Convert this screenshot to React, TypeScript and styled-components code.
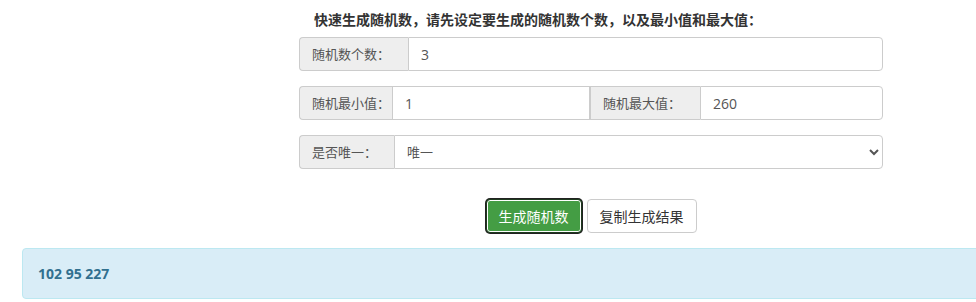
import React from "react";
import styled, { createGlobalStyle } from "styled-components";

const GlobalStyle = createGlobalStyle`
  html, body {
    margin: 0;
    padding: 0;
    background: #fff;
    overflow: hidden;
  }
  body {
    font-family: "Open Sans", "Noto Sans CJK SC", sans-serif;
    font-size: 14px;
    color: #333;
  }
`;

const Page = styled.div`
  width: 976px;
  padding-top: 10px;
`;

const Form = styled.div`
  width: 584px;
  margin-left: 299px;
`;

const Title = styled.div`
  font-weight: bold;
  line-height: 20px;
  padding-left: 15px;
  margin-bottom: 7px;
  color: #333;
`;

const Group = styled.div`
  display: flex;
  height: 34px;
  margin-bottom: 15px;
`;

const Addon = styled.span<{ $w: number; $first?: boolean }>`
  display: flex;
  align-items: center;
  box-sizing: border-box;
  width: ${(p) => p.$w}px;
  flex: none;
  padding: 0 0 0 12px;
  white-space: nowrap;
  font-size: 13px;
  background: #eee;
  color: #555;
  border: 1px solid #ccc;
  border-right: none;
  border-radius: ${(p) => (p.$first ? "4px 0 0 4px" : "0")};
  line-height: 1;
`;

const Input = styled.input<{ $last?: boolean; $w?: number }>`
  box-sizing: border-box;
  flex: ${(p) => (p.$w ? "none" : "1")};
  width: ${(p) => (p.$w ? `${p.$w}px` : "auto")};
  min-width: 0;
  height: 34px;
  padding: 0 12px;
  border: 1px solid #ccc;
  border-radius: ${(p) => (p.$last ? "0 4px 4px 0" : "0")};
  font-family: "Open Sans", "Noto Sans CJK SC", sans-serif;
  font-size: 14px;
  color: #555;
  outline: none;
`;

const Select = styled.select`
  box-sizing: border-box;
  flex: 1;
  height: 34px;
  padding: 0 8px;
  border: 1px solid #ccc;
  border-radius: 0 4px 4px 0;
  background: #fff;
  font-family: "Open Sans", "Noto Sans CJK SC", sans-serif;
  font-size: 13px;
  color: #555;
  outline: none;
`;

const Actions = styled.div`
  display: flex;
  justify-content: center;
  gap: 5px;
  margin-top: 30px;
  margin-bottom: 15px;
`;

const Button = styled.button<{ $primary?: boolean }>`
  box-sizing: border-box;
  height: 34px;
  padding: 0 12px;
  border-radius: 4px;
  font-family: "Open Sans", "Noto Sans CJK SC", sans-serif;
  font-size: 14px;
  cursor: pointer;
  border: 1px solid ${(p) => (p.$primary ? "#1e3a1e" : "#ccc")};
  background: ${(p) => (p.$primary ? "#449d44" : "#fff")};
  color: ${(p) => (p.$primary ? "#fff" : "#333")};
  box-shadow: ${(p) =>
    p.$primary ? "inset 0 0 0 1px #fff, 0 0 0 1px #222" : "none"};
`;

const Alert = styled.div`
  box-sizing: border-box;
  margin-left: 22px;
  width: 970px;
  height: 51px;
  display: flex;
  align-items: center;
  padding: 0 15px;
  background: #d9edf7;
  border: 1px solid #bce8f1;
  border-radius: 4px;
  color: #31708f;
  font-weight: bold;
`;

export default function App() {
  return (
    <Page>
      <GlobalStyle />
      <Form>
        <Title>快速生成随机数，请先设定要生成的随机数个数，以及最小值和最大值：</Title>
        <Group>
          <Addon $w={109} $first>随机数个数：</Addon>
          <Input $last defaultValue="3" />
        </Group>
        <Group>
          <Addon $w={93} $first>随机最小值：</Addon>
          <Input $w={198} defaultValue="1" />
          <Addon $w={110}>随机最大值：</Addon>
          <Input $last defaultValue="260" />
        </Group>
        <Group>
          <Addon $w={95} $first>是否唯一：</Addon>
          <Select defaultValue="1">
            <option value="1">唯一</option>
            <option value="0">不唯一</option>
          </Select>
        </Group>
        <Actions>
          <Button $primary>生成随机数</Button>
          <Button>复制生成结果</Button>
        </Actions>
      </Form>
      <Alert>102 95 227</Alert>
    </Page>
  );
}
